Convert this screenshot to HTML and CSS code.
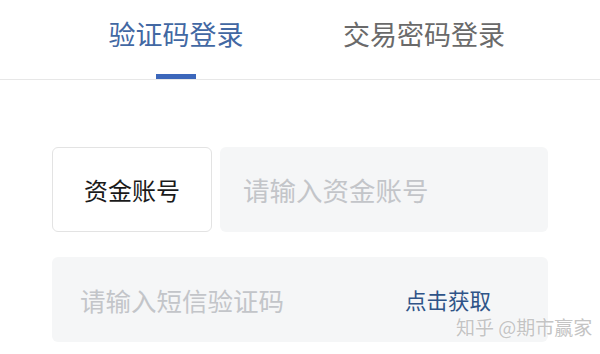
FILE: index.html
```html
<!DOCTYPE html>
<html lang="zh-CN">
<head>
<meta charset="utf-8">
<title>登录</title>
<link rel="stylesheet" href="styles.css">
</head>
<body>
<div class="page">
  <div class="tabs">
    <div class="tab active">
      <span class="tab-label">验证码登录</span>
      <span class="tab-bar"></span>
    </div>
    <div class="tab">
      <span class="tab-label">交易密码登录</span>
      <span class="tab-bar"></span>
    </div>
  </div>
  <div class="form">
    <div class="row">
      <div class="label-box">资金账号</div>
      <div class="input-box account"><span class="placeholder">请输入资金账号</span></div>
    </div>
    <div class="row">
      <div class="input-box sms">
        <span class="placeholder">请输入短信验证码</span>
        <span class="get-code">点击获取</span>
      </div>
    </div>
  </div>
  <div class="watermark">知乎 @期市赢家</div>
</div>
</body>
</html>
```
FILE: styles.css
```css
* { box-sizing: border-box; }
html, body { margin: 0; padding: 0; background: #fff; }
body {
  font-family: "Noto Sans CJK SC", "Noto Sans", sans-serif;
  width: 600px;
  height: 354px;
  overflow: hidden;
}
.page { position: relative; width: 600px; height: 354px; }
.tabs {
  display: flex;
  padding: 0 52px;
  border-bottom: 1px solid #e7e7e7;
}
.tab {
  flex: 1;
  display: flex;
  flex-direction: column;
  align-items: center;
  padding-top: 18px;
}
.tab-label {
  font-size: 27px;
  line-height: 32px;
  color: #6a6a6a;
}
.tab.active .tab-label { color: #4268a3; }
.tab-bar {
  display: block;
  width: 40px;
  height: 5px;
  margin-top: 24px;
  background: transparent;
}
.tab.active .tab-bar { background: #3c67bb; }
.form {
  padding: 67px 52px 0;
  display: flex;
  flex-direction: column;
  gap: 25px;
}
.row {
  display: flex;
  gap: 8px;
  height: 85px;
}
.label-box {
  width: 160px;
  border: 1px solid #e3e3e3;
  border-radius: 6px;
  display: flex;
  align-items: center;
  justify-content: center;
  font-size: 24px;
  color: #1a1a1a;
}
.input-box {
  flex: 1;
  background: #f5f6f7;
  border-radius: 6px;
  display: flex;
  align-items: center;
}
.placeholder {
  font-size: 26px;
  color: #c3c5c9;
}
.account { padding-left: 23px; }
.account .placeholder { font-size: 26.5px; }
.sms {
  padding-left: 28px;
  padding-right: 57px;
  justify-content: space-between;
}
.sms .placeholder { font-size: 25.5px; }
.get-code {
  font-size: 21.5px;
  color: #2f5488;
}
.watermark {
  position: absolute;
  left: 456px;
  top: 314px;
  font-size: 19px;
  line-height: 26px;
  color: #c4c4c4;
  text-shadow: 0 0 1px #fff, 0 0 2px #fff;
}
```
